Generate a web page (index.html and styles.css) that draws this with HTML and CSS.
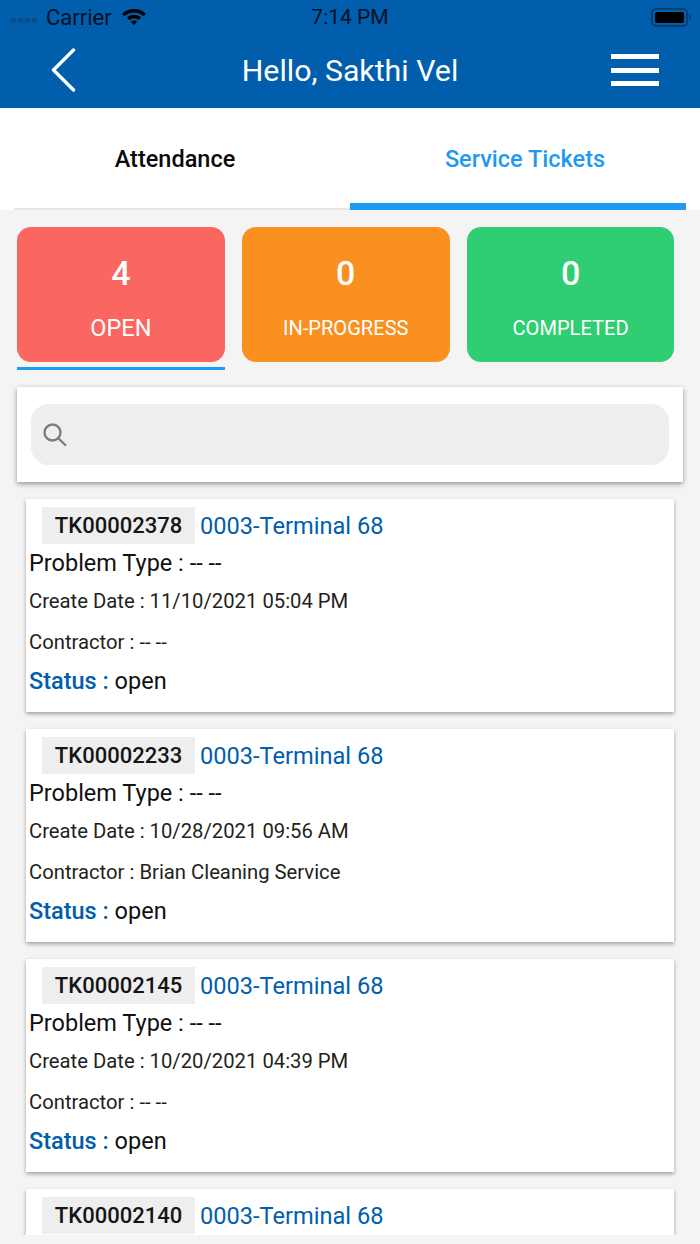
FILE: index.html
```html
<!DOCTYPE html>
<html lang="en">
<head>
<meta charset="utf-8">
<title>Service Tickets</title>
<link rel="stylesheet" href="styles.css">
</head>
<body>
<div class="app">
  <header class="top">
    <div class="status">
      <div class="status-left">
        <span class="dots"><i></i><i></i><i></i><i></i></span>
        <span class="carrier">Carrier</span>
        <svg class="wifi" width="26" height="18" viewBox="0 0 26 18"><path d="M13 1C8.300 1 4.100 2.800 1 5.800L3.300 8.300C5.900 5.900 9.300 4.400 13 4.400S20.100 5.900 22.700 8.300L25 5.800C21.900 2.800 17.700 1 13 1Z"/><path d="M13 6.800C10.300 6.800 7.800 7.800 5.900 9.600L8.200 12.100C9.500 11 11.200 10.200 13 10.200S16.500 11 17.800 12.100L20.100 9.600C18.200 7.800 15.700 6.800 13 6.800Z"/><path d="M13 12.400C11.800 12.400 10.700 12.800 9.900 13.600L13 17.200L16.100 13.600C15.300 12.800 14.200 12.400 13 12.400Z"/></svg>
      </div>
      <div class="status-time">7:14 PM</div>
      <div class="status-right">
        <span class="battery"><span class="battery-fill"></span></span><span class="battery-tip"></span>
      </div>
    </div>
    <div class="nav">
      <svg class="back" width="26" height="44" viewBox="0 0 26 44"><path d="M23.500 2L3.500 22L23.500 42"/></svg>
      <h1 class="title">Hello, Sakthi Vel</h1>
      <div class="burger"><i></i><i></i><i></i></div>
    </div>
  </header>

  <nav class="tabs">
    <div class="tab tab-left">Attendance</div>
    <div class="tab tab-active">Service Tickets</div>
  </nav>

  <main class="content">
    <section class="stats">
      <div class="stat-col stat-selected">
        <div class="stat stat-open"><b>4</b><span>OPEN</span></div>
      </div>
      <div class="stat-col">
        <div class="stat stat-progress"><b>0</b><span class="small">IN-PROGRESS</span></div>
      </div>
      <div class="stat-col">
        <div class="stat stat-done"><b>0</b><span class="small">COMPLETED</span></div>
      </div>
    </section>

    <section class="search-card">
      <div class="search">
        <svg width="24" height="24" viewBox="0 0 24 24"><circle cx="9.500" cy="9.500" r="8"/><path d="M15.500 15.500L22.300 22"/></svg>
      </div>
    </section>

    <div class="list">
      <section class="ticket">
        <div class="ticket-head"><span class="tk">TK00002378</span><span class="site">0003-Terminal 68</span></div>
        <div class="problem">Problem Type : -- --</div>
        <div class="meta meta-date">Create Date : 11/10/2021 05:04 PM</div>
        <div class="meta meta-contractor">Contractor : -- --</div>
        <div class="state"><b>Status : </b>open</div>
      </section>
      <section class="ticket">
        <div class="ticket-head"><span class="tk">TK00002233</span><span class="site">0003-Terminal 68</span></div>
        <div class="problem">Problem Type : -- --</div>
        <div class="meta meta-date">Create Date : 10/28/2021 09:56 AM</div>
        <div class="meta meta-contractor">Contractor : Brian Cleaning Service</div>
        <div class="state"><b>Status : </b>open</div>
      </section>
      <section class="ticket">
        <div class="ticket-head"><span class="tk">TK00002145</span><span class="site">0003-Terminal 68</span></div>
        <div class="problem">Problem Type : -- --</div>
        <div class="meta meta-date">Create Date : 10/20/2021 04:39 PM</div>
        <div class="meta meta-contractor">Contractor : -- --</div>
        <div class="state"><b>Status : </b>open</div>
      </section>
      <section class="ticket">
        <div class="ticket-head"><span class="tk">TK00002140</span><span class="site">0003-Terminal 68</span></div>
      </section>
    </div>
  </main>
</div>
</body>
</html>
```
FILE: styles.css
```css
* { box-sizing: border-box; }
html, body { margin: 0; padding: 0; height: 100%; overflow: hidden; }
body { font-family: Roboto, "Liberation Sans", sans-serif; background: #f4f4f4; }
.app { width: 700px; height: 1244px; overflow: hidden; display: flex; flex-direction: column; }

.top { height: 108px; background: #005eac; flex: none; }
.status { height: 34px; display: flex; align-items: center; justify-content: space-between; padding: 0 9px 0 11px; position: relative; font-size: 21px; color: #04111f; }
.status-left { display: flex; align-items: center; gap: 9px; }
.carrier { font-size: 22px; margin-left: 1px; }
.dots { display: flex; gap: 2px; margin-right: -1px; margin-top: 7px; }
.dots i { width: 5px; height: 5px; border-radius: 50%; background: #0c4c84; }
.wifi { fill: #000; }
.status-time { position: absolute; left: 0; right: 0; text-align: center; }
.status-right { display: flex; align-items: center; }
.battery { width: 37px; height: 19px; border: 2px solid #0a3f70; border-radius: 5px; padding: 2px; display: block; }
.battery-fill { display: block; width: 100%; height: 100%; background: #000; border-radius: 2px; }
.battery-tip { width: 2px; height: 6px; background: #0a3f70; margin-left: 1px; border-radius: 0 2px 2px 0; }

.nav { height: 74px; display: flex; align-items: center; justify-content: space-between; padding: 0 41px 2px 50px; position: relative; }
.back { fill: none; stroke: #fff; stroke-width: 3.400; stroke-linecap: round; stroke-linejoin: round; }
.title { position: absolute; left: 0; right: 0; margin: 0; text-align: center; color: #fff; font-size: 30.300px; font-weight: 400; }
.burger { width: 48px; display: flex; flex-direction: column; gap: 8.500px; }
.burger i { display: block; height: 5px; background: #fff; }

.tabs { height: 102px; background: #fff; flex: none; display: flex; padding: 0 14px; }
.tab { flex: 1; display: flex; align-items: center; justify-content: center; font-size: 23.500px; font-weight: 500; color: #0b0b0b; border-bottom: 2px solid #e6e6e6; padding-top: 1px; }
.tab-left { padding-right: 14px; }
.tab-active { color: #1e9af3; border-bottom: 7px solid #1e9af3; padding-top: 6px; padding-left: 14px; }

.content { flex: 1; min-height: 0; padding: 17px 0 0; display: flex; flex-direction: column; }
.stats { display: flex; gap: 17px; padding: 0 25.500px 0 17px; flex: none; }
.stat-col { flex: 1; height: 143px; }
.stat-selected { border-bottom: 3px solid #1e9af3; }
.stat { height: 135px; border-radius: 14px; color: #fff; display: flex; flex-direction: column; align-items: center; }
.stat b { font-size: 34px; font-weight: 500; line-height: 40px; margin-top: 26px; }
.stat span { font-size: 23.500px; line-height: 28px; margin-top: 21px; }
.stat span.small { font-size: 20.100px; }
.stat-open { background: #fa6760; }
.stat-progress { background: #f9901f; }
.stat-done { background: #2fce72; }

.search-card { height: 95px; margin: 17px 17px 0; background: #fff; padding: 17px 14px; box-shadow: 0 2px 5px rgba(0,0,0,.4); flex: none; }
.search { height: 61px; background: #eeeeee; border-radius: 18px; display: flex; align-items: center; padding-left: 12px; }
.search svg { fill: none; stroke: #7d7d7d; stroke-width: 2.400; stroke-linecap: round; }

.list { flex: 1; min-height: 0; margin-bottom: 9px; overflow: hidden; padding: 0 26px; }
.ticket { height: 213px; margin-top: 17px; background: #fff; padding: 8px 0 0 3px; box-shadow: 0 2px 4px rgba(0,0,0,.35); }
.ticket-head { display: flex; align-items: center; height: 37px; padding-left: 13px; }
.tk { height: 37px; line-height: 37px; width: 153px; text-align: center; background: #eeeeee; font-size: 22px; font-weight: 500; color: #151515; }
.site { margin-left: 5px; font-size: 23.600px; color: #005eac; }
.problem { font-size: 23.500px; line-height: 28px; color: #111; margin-top: 5px; }
.meta { font-size: 20.250px; line-height: 24px; color: #231f20; }
.meta-date { margin-top: 12px; }
.meta-contractor { margin-top: 17px; }
.state { font-size: 23.500px; line-height: 28px; margin-top: 13px; color: #111; }
.state b { font-weight: 500; color: #005eac; }
```
